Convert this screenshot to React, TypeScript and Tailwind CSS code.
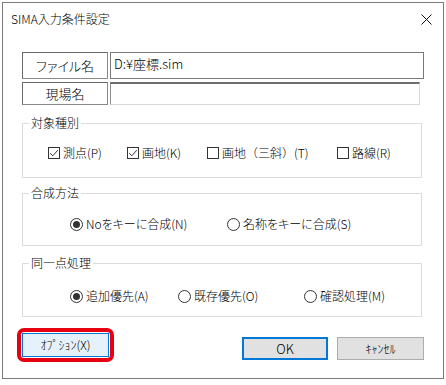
import React from "react";

function CheckBox({ checked }: { checked: boolean }) {
  return (
    <span className="w-[12px] h-[12px] border border-[#333333] bg-white flex items-center justify-center shrink-0">
      {checked && (
        <svg width="10" height="10" viewBox="0 0 10 10">
          <path d="M1.2 5.2 L3.8 7.8 L8.8 2.2" fill="none" stroke="#333" strokeWidth="1" />
        </svg>
      )}
    </span>
  );
}

function Radio({ checked }: { checked: boolean }) {
  return (
    <span className="w-[13px] h-[13px] rounded-full border border-[#333333] bg-white flex items-center justify-center shrink-0">
      {checked && <span className="w-[7px] h-[7px] rounded-full bg-[#333333]" />}
    </span>
  );
}

function Group({ title, h, children }: { title: string; h: string; children: React.ReactNode }) {
  return (
    <div className={`relative w-[400px] border border-[#dcdcdc] ${h}`}>
      <span className="absolute left-[6px] top-[-9px] bg-white px-[2px] leading-[16px] text-[12px]">{title}</span>
      {children}
    </div>
  );
}

export default function App() {
  return (
    <div className="w-[446px] h-[385px] bg-white pt-[2px] pl-[2px] font-['Meiryo_UI','Noto_Sans_CJK_JP',sans-serif] font-light text-[12px] text-black leading-[16px]">
      <div className="w-[442px] h-[377px] border border-[#7a7a7a] bg-white flex flex-col">
        {/* title bar */}
        <div className="h-[32px] flex items-center justify-between pl-[8px] pr-[11px]">
          <span className="text-[12px]">SIMA入力条件設定</span>
          <svg width="11" height="11" viewBox="0 0 11 11">
            <path d="M0.5 0.5 L10.5 10.5 M10.5 0.5 L0.5 10.5" stroke="#111" strokeWidth="1" />
          </svg>
        </div>

        <div className="flex flex-col pl-[19px]">
          {/* row 1 */}
          <div className="mt-[17px] flex h-[27px]">
            <div className="w-[86px] h-full border border-[#8a8a8a] border-t-[#6a6a6a] border-l-[#6a6a6a] flex items-center justify-center text-[13px] [font-feature-settings:'palt']">
              ファイル名
            </div>
            <div className="ml-[2px] w-[314px] h-full border border-[#7a7a7a] pl-[3px] pt-[3px] text-[13px]">D:¥座標.sim</div>
          </div>
          {/* row 2 */}
          <div className="mt-[3px] flex h-[23px]">
            <div className="w-[86px] h-full border border-[#8a8a8a] border-t-[#6a6a6a] border-l-[#6a6a6a] flex items-center justify-center text-[13px]">
              現場名
            </div>
            <div className="ml-[2px] w-[310px] h-full border border-[#d9d9d9] border-t-2 border-t-[#6d6d6d] border-l-[#8d8d8d]" />
          </div>

          {/* group 1 */}
          <div className="mt-[18px]">
            <Group title="対象種別" h="h-[55px]">
              <div className="flex items-center pl-[25px] pt-[21px]">
                <div className="w-[79px] flex items-center gap-[3px]">
                  <CheckBox checked />
                  <span>測点(P)</span>
                </div>
                <div className="w-[80px] flex items-center gap-[3px]">
                  <CheckBox checked />
                  <span>画地(K)</span>
                </div>
                <div className="w-[130px] flex items-center gap-[3px]">
                  <CheckBox checked={false} />
                  <span>画地（三斜）(T)</span>
                </div>
                <div className="flex items-center gap-[3px]">
                  <CheckBox checked={false} />
                  <span>路線(R)</span>
                </div>
              </div>
            </Group>
          </div>

          {/* group 2 */}
          <div className="mt-[15px]">
            <Group title="合成方法" h="h-[53px]">
              <div className="flex items-center pl-[47px] pt-[22px] [font-feature-settings:'palt']">
                <div className="w-[157px] flex items-center gap-[3px]">
                  <Radio checked />
                  <span>Noをキーに合成(N)</span>
                </div>
                <div className="flex items-center gap-[3px]">
                  <Radio checked={false} />
                  <span>名称をキーに合成(S)</span>
                </div>
              </div>
            </Group>
          </div>

          {/* group 3 */}
          <div className="mt-[17px]">
            <Group title="同一点処理" h="h-[54px]">
              <div className="flex items-center pl-[47px] pt-[24px]">
                <div className="w-[108px] flex items-center gap-[3px]">
                  <Radio checked />
                  <span>追加優先(A)</span>
                </div>
                <div className="w-[126px] flex items-center gap-[3px]">
                  <Radio checked={false} />
                  <span>既存優先(O)</span>
                </div>
                <div className="flex items-center gap-[3px]">
                  <Radio checked={false} />
                  <span>確認処理(M)</span>
                </div>
              </div>
            </Group>
          </div>
        </div>

        {/* buttons */}
        <div className="mt-[11px] flex items-start pl-[14px] pr-[19px]">
          <div className="border-[4px] border-[#e60012] rounded-[7px] p-[1px]">
            <div className="w-[87px] h-[24px] border border-[#0078d7] bg-[#e5f1fb] flex items-center justify-center">
              ｵﾌﾟｼｮﾝ(X)
            </div>
          </div>
          <div className="ml-auto mt-[9px] w-[86px] h-[23px] border-2 border-[#0078d7] bg-[#e1e1e1] flex items-center justify-center text-[13px]">
            OK
          </div>
          <div className="ml-[9px] mt-[9px] w-[87px] h-[23px] border border-[#adadad] bg-[#e1e1e1] flex items-center justify-center">
            ｷｬﾝｾﾙ
          </div>
        </div>
      </div>
    </div>
  );
}
